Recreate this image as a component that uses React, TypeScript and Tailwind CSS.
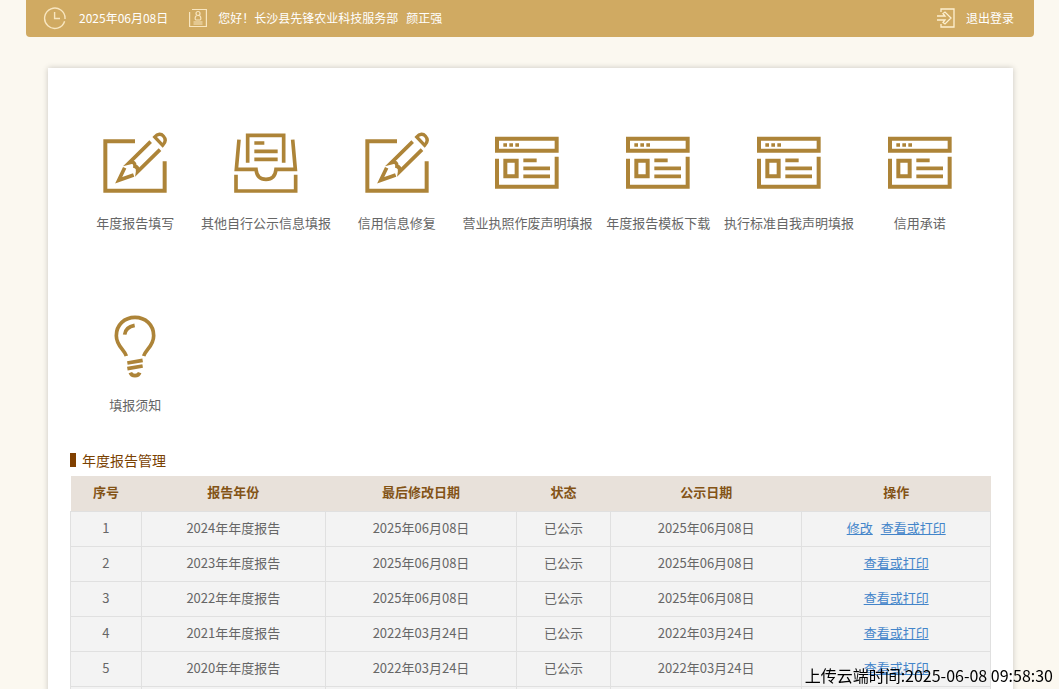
import type { ReactNode } from "react";

function PencilIcon() {
  return (
    <svg viewBox="38 22 192 186" width="64" height="62" fill="none" stroke="#ad8438" strokeWidth="12" aria-hidden="true">
      <path d="M134 50H45V198H223V110" />
      <path d="M181 51L117 114Q135 109 134 125Q144 127 142 141L209 75" strokeWidth="11" />
      <path d="M103 129L85 167L130 151" strokeWidth="11" />
      <path d="M193 37C202 26 213 27 219 34C227 43 226 53 217 62Z" strokeWidth="10" />
    </svg>
  );
}

function TrayIcon() {
  return (
    <svg viewBox="104 22 192 186" width="64" height="62" fill="none" stroke="#ad8438" strokeWidth="11" aria-hidden="true">
      <path d="M145 114V32H253V114" />
      <path d="M165 55H195M165 80H235M165 104H235" />
      <path d="M119 45L111 134H170Q173 164 200 164Q227 164 230 134H288L280 45" />
      <path d="M110 150V199H289V150" />
    </svg>
  );
}

function BrowserIcon() {
  return (
    <svg viewBox="107 22 192 186" width="64" height="62" fill="none" stroke="#ad8438" strokeWidth="12" aria-hidden="true">
      <path d="M113 42H292V78H113Z" />
      <path d="M132 61H143M150 61H161M168 61H179" strokeWidth="10" />
      <path d="M113 102V186H292V96" />
      <path d="M138 108H172V155H138Z" />
      <path d="M192 107H232M192 131H272M192 155H272" strokeWidth="11" />
    </svg>
  );
}

function BulbIcon() {
  return (
    <svg viewBox="39 22 192 192" width="64" height="64" fill="none" stroke="#ad8438" strokeWidth="11" aria-hidden="true">
      <path d="M109 148C103 128 79 118 79 87C79 54 104 32 135 32C166 32 191 54 191 87C191 118 167 128 161 148" />
      <path d="M104 84Q106 61 134 56" />
      <path d="M112 169L158 161M112 186L158 178" />
      <path d="M121 198Q124 207 135 207Q146 207 149 198" />
    </svg>
  );
}

const entries: { label: string; icon: ReactNode }[] = [
  { label: "年度报告填写", icon: <PencilIcon /> },
  { label: "其他自行公示信息填报", icon: <TrayIcon /> },
  { label: "信用信息修复", icon: <PencilIcon /> },
  { label: "营业执照作废声明填报", icon: <BrowserIcon /> },
  { label: "年度报告模板下载", icon: <BrowserIcon /> },
  { label: "执行标准自我声明填报", icon: <BrowserIcon /> },
  { label: "信用承诺", icon: <BrowserIcon /> },
  { label: "填报须知", icon: <BulbIcon /> },
];

const reports = [
  { year: "2024年年度报告", modified: "2025年06月08日", published: "2025年06月08日", editable: true },
  { year: "2023年年度报告", modified: "2025年06月08日", published: "2025年06月08日", editable: false },
  { year: "2022年年度报告", modified: "2025年06月08日", published: "2025年06月08日", editable: false },
  { year: "2021年年度报告", modified: "2022年03月24日", published: "2022年03月24日", editable: false },
  { year: "2020年年度报告", modified: "2022年03月24日", published: "2022年03月24日", editable: false },
];

const columns = ["序号", "报告年份", "最后修改日期", "状态", "公示日期", "操作"];

function TopBar() {
  return (
    <header className="mr-[25px] ml-[26px] flex h-[37px] items-center rounded-b bg-[#d0aa62] pr-5 pb-0.5 pl-[17px] text-xs text-white">
      <svg viewBox="0 0 24 24" width="24" height="24" fill="none" stroke="#f8e6c0" strokeWidth="1.4" aria-hidden="true">
        <path d="M21.6 15.2A10.2 10.2 0 1 1 22 13M11.6 6V12.5H17" />
      </svg>
      <span className="ml-3">2025年06月08日</span>
      <svg className="ml-5" viewBox="0 0 20 20" width="20" height="20" fill="none" stroke="#f8e6c0" strokeWidth="1.2" aria-hidden="true">
        <path d="M1.600 4V18.500H18.400V1.500H4" />
        <circle cx="10" cy="5.5" r="2" />
        <path d="M8.500 7.500C6.500 9 7 12 8 12H12C13 12 13.500 9 11.500 7.500M5.500 14H14.500M5.500 16H14.500" />
      </svg>
      <span className="ml-2.5">您好！长沙县先锋农业科技服务部</span>
      <span className="ml-2">颜正强</span>
      <a href="#logout" className="ml-auto flex items-center gap-2.5">
        <svg viewBox="0 0 20 20" width="20" height="20" fill="none" stroke="#fdf0d0" strokeWidth="1.3" aria-hidden="true">
          <path d="M5 4V1H18V19H5V16" />
          <path d="M1 8H9L7 5.500L9 4L15 10L9 16L7 14.500L9 12H1" />
        </svg>
        退出登录
      </a>
    </header>
  );
}

export default function App() {
  return (
    <div className="min-h-screen bg-[#fbf8f0] font-['Noto_Sans_CJK_SC',sans-serif]">
      <TopBar />
      <main className="mr-[46px] ml-12 mt-[31px] bg-white px-[22px] pb-8 shadow-[0_0_6px_rgba(0,0,0,0.2)]">
        <nav className="grid grid-cols-7 pt-16 pr-1.5">
          {entries.map((entry) => (
            <a
              key={entry.label}
              href="#entry"
              className="flex h-[182px] flex-col items-center gap-[17px] text-[13px] leading-5 whitespace-nowrap text-[#666]"
            >
              <span className="flex h-16 items-start">{entry.icon}</span>
              {entry.label}
            </a>
          ))}
        </nav>
        <h2 className="-mt-12 flex h-6 items-center gap-1.5 text-sm text-[#7a4100]">
          <span className="h-3.5 w-1.5 bg-[#804000]" />
          年度报告管理
        </h2>
        <table className="mt-1 w-full table-fixed border-collapse text-center text-[13px] leading-5 text-[#666]">
          <colgroup>
            <col className="w-[7.7%]" />
            <col className="w-[20%]" />
            <col className="w-[20.8%]" />
            <col className="w-[10.2%]" />
            <col className="w-[20.8%]" />
            <col className="w-[20.5%]" />
          </colgroup>
          <thead>
            <tr className="h-[35px] bg-[#e8e1da] text-[#835316]">
              {columns.map((name) => (
                <th key={name} scope="col" className="pb-0.5 font-bold">
                  {name}
                </th>
              ))}
            </tr>
          </thead>
          <tbody className="bg-[#f3f3f3]">
            {reports.map((report, index) => (
              <tr key={report.year} className="h-[35px]">
                <td className="border border-[#e0e0e0] pb-0.5">{index + 1}</td>
                <td className="border border-[#e0e0e0] pb-0.5">{report.year}</td>
                <td className="border border-[#e0e0e0] pb-0.5">{report.modified}</td>
                <td className="border border-[#e0e0e0] pb-0.5">已公示</td>
                <td className="border border-[#e0e0e0] pb-0.5">{report.published}</td>
                <td className="border border-[#e0e0e0] pb-0.5 text-[#4385ca]">
                  <span className="flex justify-center gap-2">
                    {report.editable && (
                      <a href="#edit" className="underline">
                        修改
                      </a>
                    )}
                    <a href="#view" className="underline">
                      查看或打印
                    </a>
                  </span>
                </td>
              </tr>
            ))}
            <tr className="h-[35px]">
              {columns.map((name) => (
                <td key={name} className="border border-[#e0e0e0]" />
              ))}
            </tr>
          </tbody>
        </table>
      </main>
      <div className="fixed right-1.5 bottom-0.5 text-base leading-6 text-black">上传云端时间:2025-06-08 09:58:30</div>
    </div>
  );
}
